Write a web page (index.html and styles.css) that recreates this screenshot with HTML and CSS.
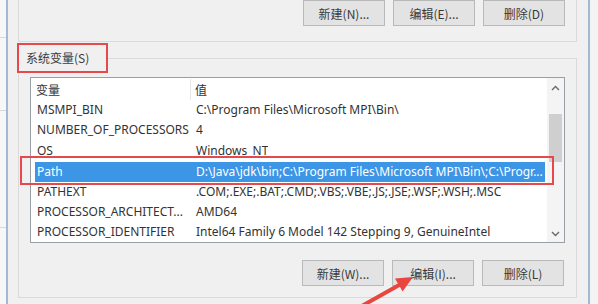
FILE: index.html
```html
<!DOCTYPE html>
<html>
<head>
<meta charset="utf-8">
<title>环境变量</title>
<link rel="stylesheet" href="styles.css">
</head>
<body>
  <div class="desk">
    <div class="side">
      <div class="side-line first"></div>
      <div class="side-line second"></div>
      <div class="side-line third"></div>
    </div>

    <div class="window">
      <!-- user variables group, only its bottom is visible -->
      <div class="group-top">
        <div class="button-row">
          <button class="btn">新建(N)...</button>
          <button class="btn">编辑(E)...</button>
          <button class="btn">删除(D)</button>
        </div>
      </div>

      <fieldset class="group-sys">
        <legend class="group-title">系统变量(S)</legend>

        <div class="list">
          <div class="rows">
            <div class="row head">
              <div class="cell name">变量</div>
              <div class="cell value">值</div>
            </div>
            <div class="row">
              <div class="cell name">MSMPI_BIN</div>
              <div class="cell value">C:\Program Files\Microsoft MPI\Bin\</div>
            </div>
            <div class="row">
              <div class="cell name">NUMBER_OF_PROCESSORS</div>
              <div class="cell value">4</div>
            </div>
            <div class="row">
              <div class="cell name">OS</div>
              <div class="cell value">Windows_NT</div>
            </div>
            <div class="row selected">
              <div class="cell name">Path</div>
              <div class="cell value">D:\Java\jdk\bin;C:\Program Files\Microsoft MPI\Bin\;C:\Progr...</div>
            </div>
            <div class="row">
              <div class="cell name">PATHEXT</div>
              <div class="cell value">.COM;.EXE;.BAT;.CMD;.VBS;.VBE;.JS;.JSE;.WSF;.WSH;.MSC</div>
            </div>
            <div class="row">
              <div class="cell name">PROCESSOR_ARCHITECT...</div>
              <div class="cell value">AMD64</div>
            </div>
            <div class="row">
              <div class="cell name">PROCESSOR_IDENTIFIER</div>
              <div class="cell value">Intel64 Family 6 Model 142 Stepping 9, GenuineIntel</div>
            </div>
          </div>

          <div class="scrollbar">
            <svg class="chevron" width="17" height="17" viewBox="0 0 17 17">
              <path d="M5 10 L8.5 6.5 L12 10" fill="none" stroke="#6a6a6a" stroke-width="1.4"/>
            </svg>
            <div class="thumb"></div>
            <div class="track-fill"></div>
            <svg class="chevron" width="17" height="17" viewBox="0 0 17 17">
              <path d="M5 7 L8.5 10.5 L12 7" fill="none" stroke="#6a6a6a" stroke-width="1.4"/>
            </svg>
          </div>

          <div class="mark-row"></div>
        </div>

        <div class="button-row lower">
          <button class="btn">新建(W)...</button>
          <button class="btn">编辑(I)...</button>
          <button class="btn">删除(L)</button>
        </div>
      </fieldset>
    </div>
  </div>

  <svg class="pointer" width="598" height="304" viewBox="0 0 598 304">
    <line x1="360" y1="307" x2="401" y2="284" stroke="#e8473f" stroke-width="4"/>
    <polygon points="413,277 402.6,291.5 395,278.5" fill="#e8473f"/>
  </svg>
</body>
</html>
```

FILE: styles.css
```css
html, body {
  margin: 0;
  padding: 0;
}
body {
  width: 598px;
  height: 304px;
  overflow: hidden;
  background: #f3f3f3;
  font-family: "Noto Sans", "Noto Sans CJK SC", sans-serif;
  font-size: 12px;
  color: #333;
  position: relative;
}
.desk {
  display: flex;
  height: 304px;
}
.side {
  width: 6px;
  background: #f7f7f7;
}
.side-line {
  height: 1px;
  background: #d8d8d8;
}
.side-line.first { margin-top: 37px; }
.side-line.second { margin-top: 72px; }
.side-line.third { margin-top: 116px; }

.window {
  width: 584px;
  background: #f0f0f0;
  border-left: 2px solid #a3bad2;
  border-right: 2px solid #a3bad2;
  padding: 0 11px 0 10px;
  box-sizing: border-box;
}

.group-top {
  height: 42px;
  border: 1px solid #dadada;
  border-top: none;
  box-sizing: border-box;
}
.button-row {
  display: flex;
  justify-content: flex-end;
  gap: 8px;
  padding-right: 11px;
}
.btn {
  width: 82px;
  height: 26px;
  background: #e3e3e3;
  border: 1px solid #b9b9b9;
  font-family: "Noto Sans CJK SC", "Noto Sans", sans-serif;
  font-size: 12px;
  color: #3a3a3a;
  padding: 0;
}

.group-sys {
  margin: 1px 0 0 0;
  padding: 0;
  height: 255px;
  border: 1px solid #dadada;
  box-sizing: border-box;
}
.group-title {
  margin-left: -2px;
  padding: 4px 17px 4px 7px;
  border: 2px solid #e5484d;
  line-height: 18px;
  font-family: "Noto Sans CJK SC", sans-serif;
  color: #3a3a3a;
}

.list {
  position: relative;
  display: flex;
  height: 166px;
  margin: 4px 11px 0 11px;
  background: #fff;
  border: 1px solid #9a9ea6;
  box-sizing: border-box;
}
.rows {
  flex: 1;
  padding-top: 1px;
}
.row {
  display: flex;
  height: 20.4px;
  line-height: 20px;
  white-space: nowrap;
}
.row.head {
  height: 21px;
  line-height: 21px;
  font-family: "Noto Sans CJK SC", sans-serif;
}
.cell.name {
  width: 160px;
  padding-left: 6px;
  box-sizing: border-box;
  overflow: hidden;
}
.cell.value {
  padding-left: 5px;
  overflow: hidden;
}
.row.head .cell.name {
  border-right: 1px solid #e6e6e6;
  padding-left: 5px;
}
.row.head .cell.value {
  padding-left: 4px;
}
.row.selected {
  margin: 1px 2px 0 4px;
  height: 19.4px;
  line-height: 19px;
  background: #3d95e6;
  color: #fff;
}
.row.selected .cell.name {
  width: 156px;
  padding-left: 2px;
}

.scrollbar {
  width: 17px;
  display: flex;
  flex-direction: column;
  background: #f4f4f4;
}
.chevron {
  display: block;
  margin-top: 2px;
}
.thumb {
  height: 48px;
  margin: 17px 2px 0 2px;
  background: #cfcfcf;
}
.track-fill {
  flex: 1;
}

/* annotation box around the Path row */
.mark-row {
  position: absolute;
  left: -11px;
  top: 78px;
  width: 534px;
  height: 29px;
  border: 2px solid #e5484d;
  box-sizing: border-box;
}

.button-row.lower {
  margin-top: 17px;
  padding-right: 12px;
}

.pointer {
  position: absolute;
  left: 0;
  top: 0;
  pointer-events: none;
}
```
